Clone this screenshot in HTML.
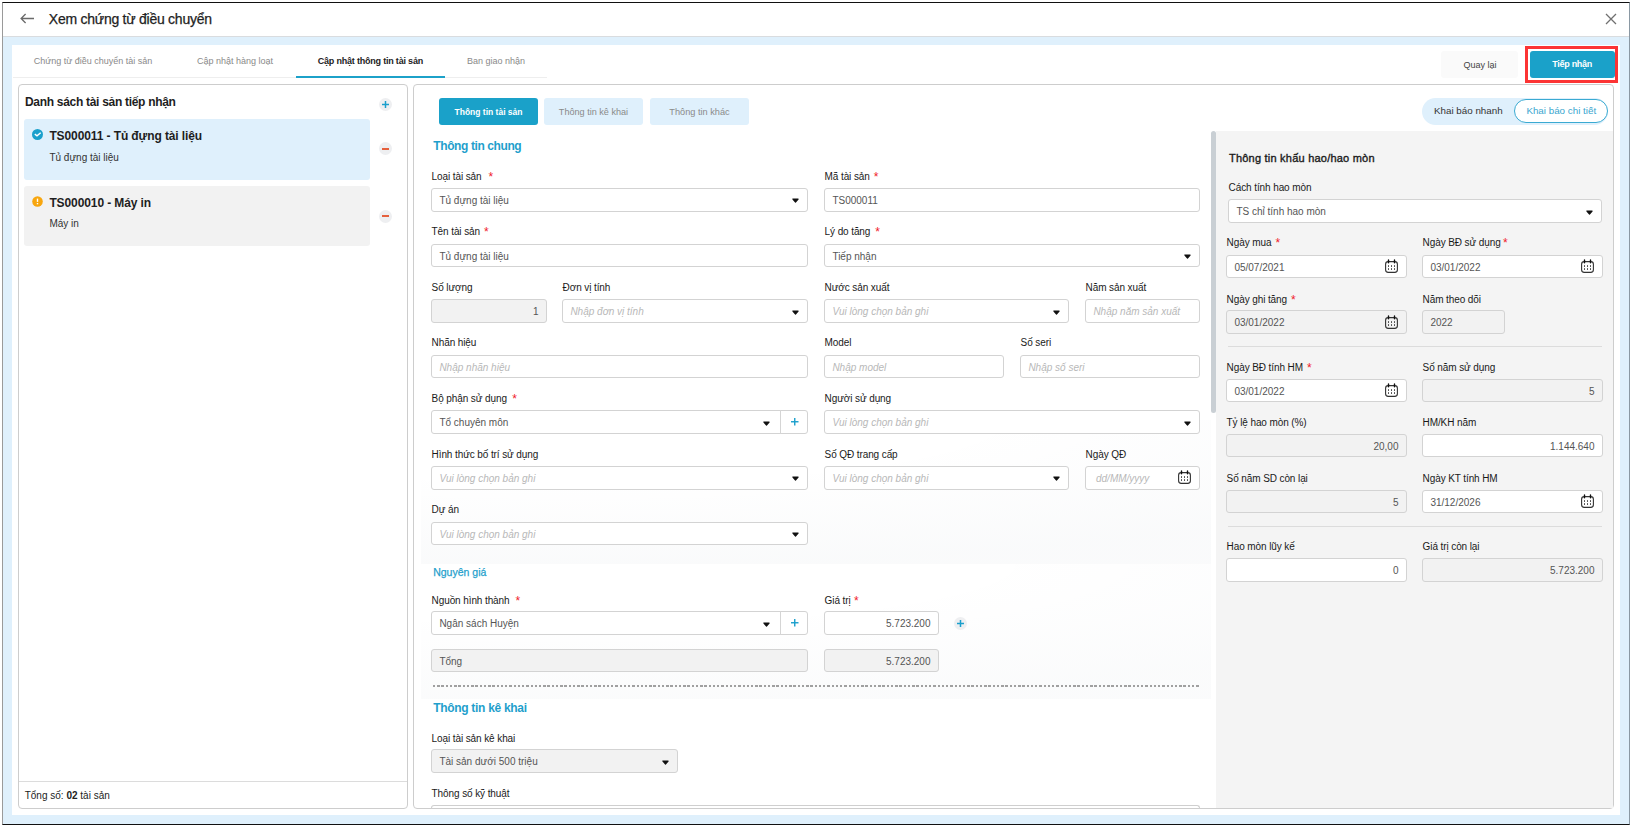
<!DOCTYPE html><html><head><meta charset="utf-8"><title>Xem chứng từ điều chuyển</title><style>
*{box-sizing:border-box}
html,body{margin:0;padding:0}
body{width:1633px;height:828px;position:relative;overflow:hidden;background:#fff;font-family:"Liberation Sans",sans-serif}
.t{position:absolute;white-space:nowrap}
.b{position:absolute}
.req{color:#f0202a}
.caret{position:absolute;width:0;height:0;border-left:4px solid transparent;border-right:4px solid transparent;border-top:4.5px solid #111}
</style></head><body>
<div class="b" style="left:2px;top:2px;width:1628px;height:823px;border-top:1px solid #111;border-bottom:1px solid #111;border-left:1px solid #9a9a9a;border-right:1px solid #8a98a3;background:#dff0fc"></div>
<div class="b" style="left:3px;top:3px;width:1626px;height:34px;background:#fff;border-bottom:1px solid #d9dcdf"></div>
<svg class="b" style="left:19px;top:11px" width="16" height="15" viewBox="0 0 16 15"><path d="M15 7.5H2M6.6 3L2.1 7.5L6.6 12" fill="none" stroke="#6a6a6a" stroke-width="1.3"/></svg>
<div class="t" style="left:48.8px;top:9.55px;font-size:14px;line-height:18px;color:#222;letter-spacing:-0.25px;-webkit-text-stroke:0.25px #222;">Xem chứng từ điều chuyển</div>
<svg class="b" style="left:1604.5px;top:12.6px" width="12" height="12" viewBox="0 0 12 12"><path d="M1 1L11 11M11 1L1 11" fill="none" stroke="#707070" stroke-width="1.3"/></svg>
<div class="b" style="left:12px;top:45px;width:1608px;height:770px;background:#fff"></div>
<div class="b" style="left:13px;top:77px;width:534px;height:1px;background:#eeeeee"></div>
<div class="b" style="left:296px;top:76px;width:149px;height:2px;background:#1ca1c9"></div>
<div class="t" style="left:33.7px;top:54.88px;font-size:9px;line-height:12px;color:#8a8a8a;">Chứng từ điều chuyển tài sản</div>
<div class="t" style="left:197px;top:54.88px;font-size:9px;line-height:12px;color:#8a8a8a;">Cập nhật hàng loạt</div>
<div class="t" style="left:317.7px;top:54.88px;font-size:9px;line-height:12px;color:#222;font-weight:700;letter-spacing:-0.2px;">Cập nhật thông tin tài sản</div>
<div class="t" style="left:467px;top:54.88px;font-size:9px;line-height:12px;color:#8a8a8a;">Ban giao nhận</div>
<div class="b" style="left:1441px;top:51px;width:77px;height:27px;background:#fafafa;border:none;border-radius:3px;"></div>
<div class="t" style="left:1463.6px;top:58.88px;font-size:9px;line-height:12px;color:#444;">Quay lại</div>
<div class="b" style="left:1525px;top:46px;width:93px;height:37px;border:3px solid #fc3434"></div>
<div class="b" style="left:1530px;top:51px;width:85px;height:27px;background:#1aa1c9;border:none;border-radius:3px;"></div>
<div class="t" style="left:1552.3px;top:58.38px;font-size:9px;line-height:12px;color:#fff;font-weight:700;letter-spacing:-0.3px;">Tiếp nhận</div>
<div class="b" style="left:18px;top:84px;width:390px;height:725px;background:#fff;border:1px solid #cdcdcd;border-radius:4px;"></div>
<div class="t" style="left:25px;top:93.54px;font-size:12px;line-height:16px;color:#1e1e1e;font-weight:700;letter-spacing:-0.3px;">Danh sách tài sản tiếp nhận</div>
<div class="b" style="left:378.9px;top:98.1px;width:13px;height:13px;border-radius:50%;background:#eeeff1"></div>
<svg class="b" style="left:380.9px;top:100.1px" width="9" height="9" viewBox="0 0 9 9"><line x1="4.5" y1="1" x2="4.5" y2="8" stroke="#1a9fcc" stroke-width="1.5"/><line x1="1" y1="4.5" x2="8" y2="4.5" stroke="#1a9fcc" stroke-width="1.5"/></svg>
<div class="b" style="left:24.4px;top:119px;width:345.6px;height:61px;background:#dff0fc;border:none;border-radius:3px;"></div>
<div class="b" style="left:24.4px;top:186px;width:345.6px;height:60px;background:#f2f2f2;border:none;border-radius:3px;"></div>
<svg class="b" style="left:32px;top:128.8px" width="11" height="11" viewBox="0 0 11 11"><circle cx="5.5" cy="5.5" r="5.5" fill="#1aa0cc"/><path d="M2.8 5.1L5 6.8L8.7 3.7" fill="none" stroke="#fff" stroke-width="1.4"/></svg>
<svg class="b" style="left:31.8px;top:195.6px" width="11" height="11" viewBox="0 0 11 11"><circle cx="5.5" cy="5.5" r="5.3" fill="#f8a60e"/><rect x="4.8" y="2.6" width="1.4" height="3.3" fill="#fff"/><rect x="4.8" y="7" width="1.4" height="1.3" fill="#fff"/></svg>
<div class="t" style="left:49.4px;top:127.84px;font-size:12px;line-height:16px;color:#1e1e1e;font-weight:700;letter-spacing:-0.1px;">TS000011 - Tủ đựng tài liệu</div>
<div class="t" style="left:49.4px;top:150.53px;font-size:10px;line-height:13px;color:#333;">Tủ đựng tài liệu</div>
<div class="t" style="left:49.4px;top:195.14px;font-size:12px;line-height:16px;color:#1e1e1e;font-weight:700;letter-spacing:-0.1px;">TS000010 - Máy in</div>
<div class="t" style="left:49.4px;top:217.44px;font-size:10px;line-height:13px;color:#333;">Máy in</div>
<div class="b" style="left:378.9px;top:142.3px;width:13px;height:13px;border-radius:50%;background:#eeeff1"></div>
<div class="b" style="left:381.7px;top:148.0px;width:7.4px;height:1.6px;background:#e5603d"></div>
<div class="b" style="left:378.9px;top:209.5px;width:13px;height:13px;border-radius:50%;background:#eeeff1"></div>
<div class="b" style="left:381.7px;top:215.2px;width:7.4px;height:1.6px;background:#e5603d"></div>
<div class="b" style="left:19px;top:781px;width:388px;height:1px;background:#dcdcdc"></div>
<div class="t" style="left:24.7px;top:789.03px;font-size:10px;line-height:13px;color:#222;">Tổng số: <b>02</b> tài sản</div>
<div class="b" style="left:413px;top:84px;width:1201px;height:725px;background:#fff;border:1px solid #cdcdcd;border-radius:4px;"></div>
<div class="b" style="left:421px;top:420px;width:790px;height:144px;background:radial-gradient(ellipse 120% 100% at 20% 0%, rgba(255,255,255,0) 40%, rgba(30,60,90,0.025) 100%)"></div>
<div class="b" style="left:421px;top:564px;width:790px;height:135px;background:radial-gradient(ellipse 120% 100% at 20% 0%, rgba(255,255,255,0) 40%, rgba(30,60,90,0.02) 100%)"></div>
<div class="b" style="left:439px;top:98px;width:99px;height:27px;background:#1aa1c9;border:none;border-radius:3px;"></div>
<div class="t" style="left:439.0px;width:99px;text-align:center;top:106.55px;font-size:8.5px;line-height:11px;color:#fff;font-weight:700;">Thông tin tài sản</div>
<div class="b" style="left:544px;top:98px;width:99px;height:27px;background:#dff0fc;border:none;border-radius:3px;"></div>
<div class="t" style="left:544.0px;width:99px;text-align:center;top:105.85px;font-size:9.1px;line-height:12px;color:#8a8a8a;">Thông tin kê khai</div>
<div class="b" style="left:650px;top:98px;width:99px;height:27px;background:#dff0fc;border:none;border-radius:3px;"></div>
<div class="t" style="left:650.0px;width:99px;text-align:center;top:105.81px;font-size:9.2px;line-height:12px;color:#8a8a8a;">Thông tin khác</div>
<div class="b" style="left:1422px;top:98px;width:186px;height:27px;background:#dff0fc;border:none;border-radius:14px;"></div>
<div class="t" style="left:1434px;top:104.10px;font-size:9.8px;line-height:13px;color:#333;">Khai báo nhanh</div>
<div class="b" style="left:1514px;top:99px;width:94px;height:24px;background:#fff;border:1px solid #3aaad2;border-radius:12px;"></div>
<div class="t" style="left:1526.4px;top:104.10px;font-size:9.8px;line-height:13px;color:#3aa6cf;">Khai báo chi tiết</div>
<div class="t" style="left:433.3px;top:138.04px;font-size:12px;line-height:16px;color:#1f9fcc;font-weight:700;letter-spacing:-0.4px;">Thông tin chung</div>
<div class="t" style="left:431.6px;top:169.53px;font-size:10px;line-height:13px;color:#1a1a1a;letter-spacing:-0.1px;">Loại tài sản<span class="req" style="margin-left:7px;letter-spacing:0;font-size:12px;vertical-align:-1px">*</span></div>
<div class="b" style="left:431px;top:187.9px;width:377px;height:23.69999999999999px;background:#fff;border:1px solid #d3d3d3;border-radius:3px;"></div>
<div class="t" style="left:439.4px;top:193.94px;font-size:10px;line-height:13px;color:#555;">Tủ đựng tài liệu</div>
<svg class="b" style="left:791.5px;top:198.45px" width="7" height="6" viewBox="0 0 7 6"><path d="M0.9 1H6.1L3.5 4Z" fill="#111" stroke="#111" stroke-width="1.2" stroke-linejoin="round"/></svg>
<div class="t" style="left:824.6px;top:169.53px;font-size:10px;line-height:13px;color:#1a1a1a;letter-spacing:-0.1px;">Mã tài sản<span class="req" style="margin-left:4px;letter-spacing:0;font-size:12px;vertical-align:-1px">*</span></div>
<div class="b" style="left:824px;top:187.9px;width:376px;height:23.69999999999999px;background:#fff;border:1px solid #d3d3d3;border-radius:3px;"></div>
<div class="t" style="left:832.4px;top:193.94px;font-size:10px;line-height:13px;color:#555;">TS000011</div>
<div class="t" style="left:431.6px;top:225.13px;font-size:10px;line-height:13px;color:#1a1a1a;letter-spacing:-0.1px;">Tên tài sản<span class="req" style="margin-left:4px;letter-spacing:0;font-size:12px;vertical-align:-1px">*</span></div>
<div class="b" style="left:431px;top:243.5px;width:377px;height:23.69999999999999px;background:#fff;border:1px solid #d3d3d3;border-radius:3px;"></div>
<div class="t" style="left:439.4px;top:249.53px;font-size:10px;line-height:13px;color:#555;">Tủ đựng tài liệu</div>
<div class="t" style="left:824.6px;top:225.13px;font-size:10px;line-height:13px;color:#1a1a1a;letter-spacing:-0.1px;">Lý do tăng<span class="req" style="margin-left:5px;letter-spacing:0;font-size:12px;vertical-align:-1px">*</span></div>
<div class="b" style="left:824px;top:243.5px;width:376px;height:23.69999999999999px;background:#fff;border:1px solid #d3d3d3;border-radius:3px;"></div>
<div class="t" style="left:832.4px;top:249.53px;font-size:10px;line-height:13px;color:#555;">Tiếp nhận</div>
<svg class="b" style="left:1183.5px;top:254.04999999999998px" width="7" height="6" viewBox="0 0 7 6"><path d="M0.9 1H6.1L3.5 4Z" fill="#111" stroke="#111" stroke-width="1.2" stroke-linejoin="round"/></svg>
<div class="t" style="left:431.6px;top:280.74px;font-size:10px;line-height:13px;color:#1a1a1a;letter-spacing:-0.1px;">Số lượng</div>
<div class="b" style="left:431px;top:299.1px;width:116px;height:23.69999999999999px;background:#f2f2f2;border:1px solid #d3d3d3;border-radius:3px;"></div>
<div class="t" style="right:1094.5px;top:305.14px;font-size:10px;line-height:13px;color:#555;">1</div>
<div class="t" style="left:562.6px;top:280.74px;font-size:10px;line-height:13px;color:#1a1a1a;letter-spacing:-0.1px;">Đơn vị tính</div>
<div class="b" style="left:562px;top:299.1px;width:246px;height:23.69999999999999px;background:#fff;border:1px solid #d3d3d3;border-radius:3px;"></div>
<div class="t" style="left:570.4px;top:305.14px;font-size:10px;line-height:13px;color:#b8b8b8;font-style:italic;">Nhập đơn vị tính</div>
<svg class="b" style="left:791.5px;top:309.65000000000003px" width="7" height="6" viewBox="0 0 7 6"><path d="M0.9 1H6.1L3.5 4Z" fill="#111" stroke="#111" stroke-width="1.2" stroke-linejoin="round"/></svg>
<div class="t" style="left:824.6px;top:280.74px;font-size:10px;line-height:13px;color:#1a1a1a;letter-spacing:-0.1px;">Nước sản xuất</div>
<div class="b" style="left:824px;top:299.1px;width:245px;height:23.69999999999999px;background:#fff;border:1px solid #d3d3d3;border-radius:3px;"></div>
<div class="t" style="left:832.4px;top:305.14px;font-size:10px;line-height:13px;color:#b8b8b8;font-style:italic;">Vui lòng chọn bản ghi</div>
<svg class="b" style="left:1052.5px;top:309.65000000000003px" width="7" height="6" viewBox="0 0 7 6"><path d="M0.9 1H6.1L3.5 4Z" fill="#111" stroke="#111" stroke-width="1.2" stroke-linejoin="round"/></svg>
<div class="t" style="left:1085.6px;top:280.74px;font-size:10px;line-height:13px;color:#1a1a1a;letter-spacing:-0.1px;">Năm sản xuất</div>
<div class="b" style="left:1085px;top:299.1px;width:115px;height:23.69999999999999px;background:#fff;border:1px solid #d3d3d3;border-radius:3px;"></div>
<div class="t" style="left:1093.4px;top:305.14px;font-size:10px;line-height:13px;color:#b8b8b8;font-style:italic;">Nhập năm sản xuất</div>
<div class="t" style="left:431.6px;top:336.34px;font-size:10px;line-height:13px;color:#1a1a1a;letter-spacing:-0.1px;">Nhãn hiệu</div>
<div class="b" style="left:431px;top:354.7px;width:377px;height:23.69999999999999px;background:#fff;border:1px solid #d3d3d3;border-radius:3px;"></div>
<div class="t" style="left:439.4px;top:360.74px;font-size:10px;line-height:13px;color:#b8b8b8;font-style:italic;">Nhập nhãn hiệu</div>
<div class="t" style="left:824.6px;top:336.34px;font-size:10px;line-height:13px;color:#1a1a1a;letter-spacing:-0.1px;">Model</div>
<div class="b" style="left:824px;top:354.7px;width:180px;height:23.69999999999999px;background:#fff;border:1px solid #d3d3d3;border-radius:3px;"></div>
<div class="t" style="left:832.4px;top:360.74px;font-size:10px;line-height:13px;color:#b8b8b8;font-style:italic;">Nhập model</div>
<div class="t" style="left:1020.6px;top:336.34px;font-size:10px;line-height:13px;color:#1a1a1a;letter-spacing:-0.1px;">Số seri</div>
<div class="b" style="left:1020px;top:354.7px;width:180px;height:23.69999999999999px;background:#fff;border:1px solid #d3d3d3;border-radius:3px;"></div>
<div class="t" style="left:1028.4px;top:360.74px;font-size:10px;line-height:13px;color:#b8b8b8;font-style:italic;">Nhập số seri</div>
<div class="t" style="left:431.6px;top:391.94px;font-size:10px;line-height:13px;color:#1a1a1a;letter-spacing:-0.1px;">Bộ phận sử dụng<span class="req" style="margin-left:5.5px;letter-spacing:0;font-size:12px;vertical-align:-1px">*</span></div>
<div class="b" style="left:431px;top:410.3px;width:377px;height:23.69999999999999px;background:#fff;border:1px solid #d3d3d3;border-radius:3px;"></div>
<div class="t" style="left:439.4px;top:416.34px;font-size:10px;line-height:13px;color:#555;">Tổ chuyên môn</div>
<div class="b" style="left:780px;top:410.3px;width:1px;height:23.69999999999999px;background:#d5d5d5"></div>
<svg class="b" style="left:762.5px;top:420.84999999999997px" width="7" height="6" viewBox="0 0 7 6"><path d="M0.9 1H6.1L3.5 4Z" fill="#111" stroke="#111" stroke-width="1.2" stroke-linejoin="round"/></svg>
<svg class="b" style="left:789.75px;top:417.4px" width="9.5" height="9.5" viewBox="0 0 9.5 9.5"><line x1="4.75" y1="1" x2="4.75" y2="8.5" stroke="#1a9fcc" stroke-width="1.4"/><line x1="1" y1="4.75" x2="8.5" y2="4.75" stroke="#1a9fcc" stroke-width="1.4"/></svg>
<div class="t" style="left:824.6px;top:391.94px;font-size:10px;line-height:13px;color:#1a1a1a;letter-spacing:-0.1px;">Người sử dụng</div>
<div class="b" style="left:824px;top:410.3px;width:376px;height:23.69999999999999px;background:#fff;border:1px solid #d3d3d3;border-radius:3px;"></div>
<div class="t" style="left:832.4px;top:416.34px;font-size:10px;line-height:13px;color:#b8b8b8;font-style:italic;">Vui lòng chọn bản ghi</div>
<svg class="b" style="left:1183.5px;top:420.84999999999997px" width="7" height="6" viewBox="0 0 7 6"><path d="M0.9 1H6.1L3.5 4Z" fill="#111" stroke="#111" stroke-width="1.2" stroke-linejoin="round"/></svg>
<div class="t" style="left:431.6px;top:447.54px;font-size:10px;line-height:13px;color:#1a1a1a;letter-spacing:-0.1px;">Hình thức bố trí sử dụng</div>
<div class="b" style="left:431px;top:465.9px;width:377px;height:23.69999999999999px;background:#fff;border:1px solid #d3d3d3;border-radius:3px;"></div>
<div class="t" style="left:439.4px;top:471.94px;font-size:10px;line-height:13px;color:#b8b8b8;font-style:italic;">Vui lòng chọn bản ghi</div>
<svg class="b" style="left:791.5px;top:476.45px" width="7" height="6" viewBox="0 0 7 6"><path d="M0.9 1H6.1L3.5 4Z" fill="#111" stroke="#111" stroke-width="1.2" stroke-linejoin="round"/></svg>
<div class="t" style="left:824.6px;top:447.54px;font-size:10px;line-height:13px;color:#1a1a1a;letter-spacing:-0.1px;">Số QĐ trang cấp</div>
<div class="b" style="left:824px;top:465.9px;width:245px;height:23.69999999999999px;background:#fff;border:1px solid #d3d3d3;border-radius:3px;"></div>
<div class="t" style="left:832.4px;top:471.94px;font-size:10px;line-height:13px;color:#b8b8b8;font-style:italic;">Vui lòng chọn bản ghi</div>
<svg class="b" style="left:1052.5px;top:476.45px" width="7" height="6" viewBox="0 0 7 6"><path d="M0.9 1H6.1L3.5 4Z" fill="#111" stroke="#111" stroke-width="1.2" stroke-linejoin="round"/></svg>
<div class="t" style="left:1085.6px;top:447.54px;font-size:10px;line-height:13px;color:#1a1a1a;letter-spacing:-0.1px;">Ngày QĐ</div>
<div class="b" style="left:1085px;top:465.9px;width:115px;height:23.69999999999999px;background:#fff;border:1px solid #d3d3d3;border-radius:3px;"></div>
<div class="t" style="left:1096px;top:471.94px;font-size:10px;line-height:13px;color:#b8b8b8;font-style:italic;">dd/MM/yyyy</div>
<svg class="b" style="left:1176.5px;top:470.45px" width="15" height="15" viewBox="0 0 15 15"><rect x="1.6" y="2.6" width="11.8" height="10.8" rx="2.6" fill="none" stroke="#333" stroke-width="1.1"/><line x1="4.5" y1="1" x2="4.5" y2="3.8" stroke="#111" stroke-width="1.4" stroke-linecap="round"/><line x1="10.5" y1="1" x2="10.5" y2="3.8" stroke="#111" stroke-width="1.4" stroke-linecap="round"/><g fill="#444"><rect x="4" y="6.2" width="1" height="1.7"/><rect x="7" y="6.2" width="1" height="1.7"/><rect x="10" y="6.2" width="1" height="1.7"/><rect x="4" y="9.2" width="1" height="1.7"/><rect x="7" y="9.2" width="1" height="1.7"/><rect x="10" y="9.2" width="1" height="1.7"/></g></svg>
<div class="t" style="left:431.6px;top:503.14px;font-size:10px;line-height:13px;color:#1a1a1a;letter-spacing:-0.1px;">Dự án</div>
<div class="b" style="left:431px;top:521.5px;width:377px;height:23.700000000000045px;background:#fff;border:1px solid #d3d3d3;border-radius:3px;"></div>
<div class="t" style="left:439.4px;top:527.53px;font-size:10px;line-height:13px;color:#b8b8b8;font-style:italic;">Vui lòng chọn bản ghi</div>
<svg class="b" style="left:791.5px;top:532.0500000000001px" width="7" height="6" viewBox="0 0 7 6"><path d="M0.9 1H6.1L3.5 4Z" fill="#111" stroke="#111" stroke-width="1.2" stroke-linejoin="round"/></svg>
<div class="t" style="left:433.2px;top:564.76px;font-size:10.5px;line-height:14px;color:#1f9fcc;-webkit-text-stroke:0.25px #1f9fcc;">Nguyên giá</div>
<div class="t" style="left:431.6px;top:593.74px;font-size:10px;line-height:13px;color:#1a1a1a;letter-spacing:-0.1px;">Nguồn hình thành<span class="req" style="margin-left:6px;letter-spacing:0;font-size:12px;vertical-align:-1px">*</span></div>
<div class="b" style="left:431px;top:611px;width:377px;height:24px;background:#fff;border:1px solid #d3d3d3;border-radius:3px;"></div>
<div class="t" style="left:439.4px;top:617.03px;font-size:10px;line-height:13px;color:#555;">Ngân sách Huyện</div>
<div class="b" style="left:780px;top:611px;width:1px;height:24px;background:#d5d5d5"></div>
<svg class="b" style="left:762.5px;top:621.7px" width="7" height="6" viewBox="0 0 7 6"><path d="M0.9 1H6.1L3.5 4Z" fill="#111" stroke="#111" stroke-width="1.2" stroke-linejoin="round"/></svg>
<svg class="b" style="left:789.75px;top:618.25px" width="9.5" height="9.5" viewBox="0 0 9.5 9.5"><line x1="4.75" y1="1" x2="4.75" y2="8.5" stroke="#1a9fcc" stroke-width="1.4"/><line x1="1" y1="4.75" x2="8.5" y2="4.75" stroke="#1a9fcc" stroke-width="1.4"/></svg>
<div class="t" style="left:824.6px;top:594.03px;font-size:10px;line-height:13px;color:#1a1a1a;letter-spacing:-0.1px;">Giá trị<span class="req" style="margin-left:3.5px;letter-spacing:0;font-size:12px;vertical-align:-1px">*</span></div>
<div class="b" style="left:824px;top:611px;width:115px;height:24px;background:#fff;border:1px solid #d3d3d3;border-radius:3px;"></div>
<div class="t" style="right:702.5px;top:617.03px;font-size:10px;line-height:13px;color:#555;">5.723.200</div>
<div class="b" style="left:954.3px;top:617.0px;width:13px;height:13px;border-radius:50%;background:#eeeff1"></div>
<svg class="b" style="left:956.3px;top:619.0px" width="9" height="9" viewBox="0 0 9 9"><line x1="4.5" y1="1" x2="4.5" y2="8" stroke="#1a9fcc" stroke-width="1.5"/><line x1="1" y1="4.5" x2="8" y2="4.5" stroke="#1a9fcc" stroke-width="1.5"/></svg>
<div class="b" style="left:431px;top:649px;width:377px;height:23px;background:#f2f2f2;border:1px solid #d3d3d3;border-radius:3px;"></div>
<div class="t" style="left:439.4px;top:655.03px;font-size:10px;line-height:13px;color:#555;">Tổng</div>
<div class="b" style="left:824px;top:649px;width:115px;height:23px;background:#f2f2f2;border:1px solid #d3d3d3;border-radius:3px;"></div>
<div class="t" style="right:702.5px;top:655.03px;font-size:10px;line-height:13px;color:#555;">5.723.200</div>
<div class="b" style="left:433px;top:685px;width:766px;height:2px;background:repeating-linear-gradient(90deg,#a0a0a0 0 2.4px,transparent 2.4px 4.24px)"></div>
<div class="t" style="left:433.2px;top:699.84px;font-size:12px;line-height:16px;color:#1f9fcc;font-weight:700;letter-spacing:-0.3px;">Thông tin kê khai</div>
<div class="t" style="left:431.6px;top:731.83px;font-size:10px;line-height:13px;color:#1a1a1a;letter-spacing:-0.1px;">Loại tài sản kê khai</div>
<div class="b" style="left:431px;top:749px;width:247px;height:24px;background:#f2f2f2;border:1px solid #d3d3d3;border-radius:3px;"></div>
<div class="t" style="left:439.4px;top:755.03px;font-size:10px;line-height:13px;color:#555;">Tài sản dưới 500 triệu</div>
<svg class="b" style="left:661.5px;top:759.7px" width="7" height="6" viewBox="0 0 7 6"><path d="M0.9 1H6.1L3.5 4Z" fill="#111" stroke="#111" stroke-width="1.2" stroke-linejoin="round"/></svg>
<div class="t" style="left:431.6px;top:787.43px;font-size:10px;line-height:13px;color:#1a1a1a;letter-spacing:-0.1px;">Thông số kỹ thuật</div>
<div class="b" style="left:431px;top:805px;width:769px;height:4px;border:1px solid #cfcfcf;border-bottom:none;border-radius:3px 3px 0 0"></div>
<div class="b" style="left:1211px;top:131px;width:5px;height:282px;background:#c9cfd4;border-radius:2.5px"></div>
<div class="b" style="left:1216px;top:131px;width:397px;height:677px;background:#f4f4f4"></div>
<div class="t" style="left:1229px;top:150.89px;font-size:11px;line-height:14px;color:#1a1a1a;letter-spacing:0.22px;-webkit-text-stroke:0.35px #1a1a1a;">Thông tin khấu hao/hao mòn</div>
<div class="t" style="left:1228.6px;top:181.03px;font-size:10px;line-height:13px;color:#1a1a1a;letter-spacing:-0.1px;">Cách tính hao mòn</div>
<div class="b" style="left:1228px;top:199px;width:374px;height:24px;background:#fff;border:1px solid #d3d3d3;border-radius:3px;"></div>
<div class="t" style="left:1236.4px;top:205.03px;font-size:10px;line-height:13px;color:#555;">TS chỉ tính hao mòn</div>
<svg class="b" style="left:1585.5px;top:209.7px" width="7" height="6" viewBox="0 0 7 6"><path d="M0.9 1H6.1L3.5 4Z" fill="#111" stroke="#111" stroke-width="1.2" stroke-linejoin="round"/></svg>
<div class="t" style="left:1226.6px;top:236.03px;font-size:10px;line-height:13px;color:#1a1a1a;letter-spacing:-0.1px;">Ngày mua<span class="req" style="margin-left:4px;letter-spacing:0;font-size:12px;vertical-align:-1px">*</span></div>
<div class="b" style="left:1226px;top:255px;width:181px;height:23px;background:#fff;border:1px solid #d3d3d3;border-radius:3px;"></div>
<div class="t" style="left:1234.4px;top:261.04px;font-size:10px;line-height:13px;color:#555;">05/07/2021</div>
<svg class="b" style="left:1383.5px;top:259.2px" width="15" height="15" viewBox="0 0 15 15"><rect x="1.6" y="2.6" width="11.8" height="10.8" rx="2.6" fill="none" stroke="#333" stroke-width="1.1"/><line x1="4.5" y1="1" x2="4.5" y2="3.8" stroke="#111" stroke-width="1.4" stroke-linecap="round"/><line x1="10.5" y1="1" x2="10.5" y2="3.8" stroke="#111" stroke-width="1.4" stroke-linecap="round"/><g fill="#444"><rect x="4" y="6.2" width="1" height="1.7"/><rect x="7" y="6.2" width="1" height="1.7"/><rect x="10" y="6.2" width="1" height="1.7"/><rect x="4" y="9.2" width="1" height="1.7"/><rect x="7" y="9.2" width="1" height="1.7"/><rect x="10" y="9.2" width="1" height="1.7"/></g></svg>
<div class="t" style="left:1422.6px;top:236.03px;font-size:10px;line-height:13px;color:#1a1a1a;letter-spacing:-0.1px;">Ngày BĐ sử dụng<span class="req" style="margin-left:2.5px;letter-spacing:0;font-size:12px;vertical-align:-1px">*</span></div>
<div class="b" style="left:1422px;top:255px;width:181px;height:23px;background:#fff;border:1px solid #d3d3d3;border-radius:3px;"></div>
<div class="t" style="left:1430.4px;top:261.04px;font-size:10px;line-height:13px;color:#555;">03/01/2022</div>
<svg class="b" style="left:1579.5px;top:259.2px" width="15" height="15" viewBox="0 0 15 15"><rect x="1.6" y="2.6" width="11.8" height="10.8" rx="2.6" fill="none" stroke="#333" stroke-width="1.1"/><line x1="4.5" y1="1" x2="4.5" y2="3.8" stroke="#111" stroke-width="1.4" stroke-linecap="round"/><line x1="10.5" y1="1" x2="10.5" y2="3.8" stroke="#111" stroke-width="1.4" stroke-linecap="round"/><g fill="#444"><rect x="4" y="6.2" width="1" height="1.7"/><rect x="7" y="6.2" width="1" height="1.7"/><rect x="10" y="6.2" width="1" height="1.7"/><rect x="4" y="9.2" width="1" height="1.7"/><rect x="7" y="9.2" width="1" height="1.7"/><rect x="10" y="9.2" width="1" height="1.7"/></g></svg>
<div class="t" style="left:1226.6px;top:292.64px;font-size:10px;line-height:13px;color:#1a1a1a;letter-spacing:-0.1px;">Ngày ghi tăng<span class="req" style="margin-left:4px;letter-spacing:0;font-size:12px;vertical-align:-1px">*</span></div>
<div class="b" style="left:1226px;top:310px;width:181px;height:24px;background:#f2f2f2;border:1px solid #d3d3d3;border-radius:3px;"></div>
<div class="t" style="left:1234.4px;top:316.04px;font-size:10px;line-height:13px;color:#555;">03/01/2022</div>
<svg class="b" style="left:1383.5px;top:314.7px" width="15" height="15" viewBox="0 0 15 15"><rect x="1.6" y="2.6" width="11.8" height="10.8" rx="2.6" fill="none" stroke="#333" stroke-width="1.1"/><line x1="4.5" y1="1" x2="4.5" y2="3.8" stroke="#111" stroke-width="1.4" stroke-linecap="round"/><line x1="10.5" y1="1" x2="10.5" y2="3.8" stroke="#111" stroke-width="1.4" stroke-linecap="round"/><g fill="#444"><rect x="4" y="6.2" width="1" height="1.7"/><rect x="7" y="6.2" width="1" height="1.7"/><rect x="10" y="6.2" width="1" height="1.7"/><rect x="4" y="9.2" width="1" height="1.7"/><rect x="7" y="9.2" width="1" height="1.7"/><rect x="10" y="9.2" width="1" height="1.7"/></g></svg>
<div class="t" style="left:1422.6px;top:292.64px;font-size:10px;line-height:13px;color:#1a1a1a;letter-spacing:-0.1px;">Năm theo dõi</div>
<div class="b" style="left:1422px;top:310px;width:83px;height:24px;background:#f2f2f2;border:1px solid #d3d3d3;border-radius:3px;"></div>
<div class="t" style="left:1430.4px;top:316.04px;font-size:10px;line-height:13px;color:#555;">2022</div>
<div class="b" style="left:1228px;top:346px;width:374px;height:1px;background:#dcdcdc"></div>
<div class="t" style="left:1226.6px;top:360.84px;font-size:10px;line-height:13px;color:#1a1a1a;letter-spacing:-0.1px;">Ngày BĐ tính HM<span class="req" style="margin-left:4px;letter-spacing:0;font-size:12px;vertical-align:-1px">*</span></div>
<div class="b" style="left:1226px;top:379px;width:181px;height:23px;background:#fff;border:1px solid #d3d3d3;border-radius:3px;"></div>
<div class="t" style="left:1234.4px;top:385.04px;font-size:10px;line-height:13px;color:#555;">03/01/2022</div>
<svg class="b" style="left:1383.5px;top:383.2px" width="15" height="15" viewBox="0 0 15 15"><rect x="1.6" y="2.6" width="11.8" height="10.8" rx="2.6" fill="none" stroke="#333" stroke-width="1.1"/><line x1="4.5" y1="1" x2="4.5" y2="3.8" stroke="#111" stroke-width="1.4" stroke-linecap="round"/><line x1="10.5" y1="1" x2="10.5" y2="3.8" stroke="#111" stroke-width="1.4" stroke-linecap="round"/><g fill="#444"><rect x="4" y="6.2" width="1" height="1.7"/><rect x="7" y="6.2" width="1" height="1.7"/><rect x="10" y="6.2" width="1" height="1.7"/><rect x="4" y="9.2" width="1" height="1.7"/><rect x="7" y="9.2" width="1" height="1.7"/><rect x="10" y="9.2" width="1" height="1.7"/></g></svg>
<div class="t" style="left:1422.6px;top:360.84px;font-size:10px;line-height:13px;color:#1a1a1a;letter-spacing:-0.1px;">Số năm sử dụng</div>
<div class="b" style="left:1422px;top:379px;width:181px;height:23px;background:#f2f2f2;border:1px solid #d3d3d3;border-radius:3px;"></div>
<div class="t" style="right:38.5px;top:385.04px;font-size:10px;line-height:13px;color:#555;">5</div>
<div class="t" style="left:1226.6px;top:416.24px;font-size:10px;line-height:13px;color:#1a1a1a;letter-spacing:-0.1px;">Tỷ lệ hao mòn (%)</div>
<div class="b" style="left:1226px;top:434px;width:181px;height:23px;background:#f2f2f2;border:1px solid #d3d3d3;border-radius:3px;"></div>
<div class="t" style="right:234.5px;top:440.04px;font-size:10px;line-height:13px;color:#555;">20,00</div>
<div class="t" style="left:1422.6px;top:416.24px;font-size:10px;line-height:13px;color:#1a1a1a;letter-spacing:-0.1px;">HM/KH năm</div>
<div class="b" style="left:1422px;top:434px;width:181px;height:23px;background:#fff;border:1px solid #d3d3d3;border-radius:3px;"></div>
<div class="t" style="right:38.5px;top:440.04px;font-size:10px;line-height:13px;color:#555;">1.144.640</div>
<div class="t" style="left:1226.6px;top:472.24px;font-size:10px;line-height:13px;color:#1a1a1a;letter-spacing:-0.1px;">Số năm SD còn lại</div>
<div class="b" style="left:1226px;top:490px;width:181px;height:23px;background:#f2f2f2;border:1px solid #d3d3d3;border-radius:3px;"></div>
<div class="t" style="right:234.5px;top:496.04px;font-size:10px;line-height:13px;color:#555;">5</div>
<div class="t" style="left:1422.6px;top:472.24px;font-size:10px;line-height:13px;color:#1a1a1a;letter-spacing:-0.1px;">Ngày KT tính HM</div>
<div class="b" style="left:1422px;top:490px;width:181px;height:23px;background:#fff;border:1px solid #d3d3d3;border-radius:3px;"></div>
<div class="t" style="left:1430.4px;top:496.04px;font-size:10px;line-height:13px;color:#555;">31/12/2026</div>
<svg class="b" style="left:1579.5px;top:494.2px" width="15" height="15" viewBox="0 0 15 15"><rect x="1.6" y="2.6" width="11.8" height="10.8" rx="2.6" fill="none" stroke="#333" stroke-width="1.1"/><line x1="4.5" y1="1" x2="4.5" y2="3.8" stroke="#111" stroke-width="1.4" stroke-linecap="round"/><line x1="10.5" y1="1" x2="10.5" y2="3.8" stroke="#111" stroke-width="1.4" stroke-linecap="round"/><g fill="#444"><rect x="4" y="6.2" width="1" height="1.7"/><rect x="7" y="6.2" width="1" height="1.7"/><rect x="10" y="6.2" width="1" height="1.7"/><rect x="4" y="9.2" width="1" height="1.7"/><rect x="7" y="9.2" width="1" height="1.7"/><rect x="10" y="9.2" width="1" height="1.7"/></g></svg>
<div class="b" style="left:1228px;top:526px;width:374px;height:1px;background:#dcdcdc"></div>
<div class="t" style="left:1226.6px;top:540.03px;font-size:10px;line-height:13px;color:#1a1a1a;letter-spacing:-0.1px;">Hao mòn lũy kế</div>
<div class="b" style="left:1226px;top:558px;width:181px;height:24px;background:#fff;border:1px solid #d3d3d3;border-radius:3px;"></div>
<div class="t" style="right:234.5px;top:564.03px;font-size:10px;line-height:13px;color:#555;">0</div>
<div class="t" style="left:1422.6px;top:540.03px;font-size:10px;line-height:13px;color:#1a1a1a;letter-spacing:-0.1px;">Giá trị còn lại</div>
<div class="b" style="left:1422px;top:558px;width:181px;height:24px;background:#f2f2f2;border:1px solid #d3d3d3;border-radius:3px;"></div>
<div class="t" style="right:38.5px;top:564.03px;font-size:10px;line-height:13px;color:#555;">5.723.200</div>
</body></html>
